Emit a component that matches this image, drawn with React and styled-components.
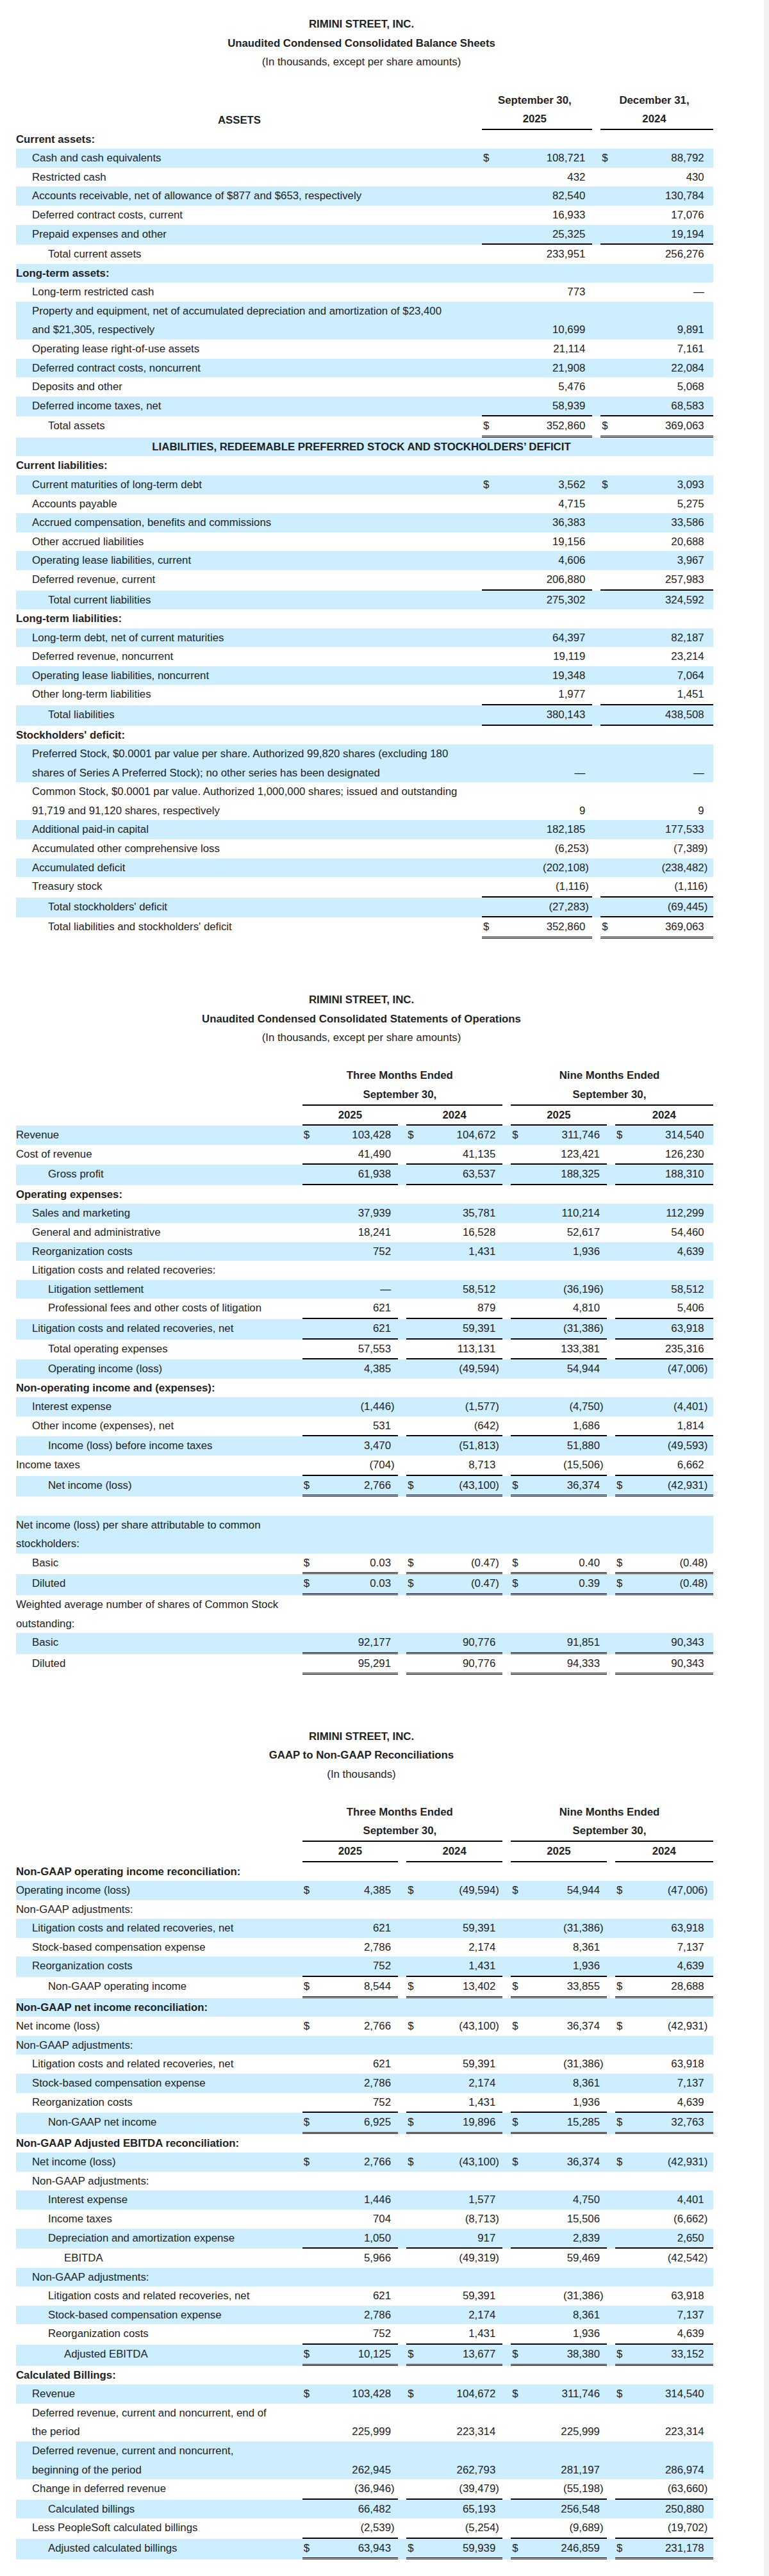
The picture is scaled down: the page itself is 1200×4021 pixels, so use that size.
import React from "react";
import styled, { createGlobalStyle } from "styled-components";

const H = 29.58;
const SHADE = "#cceeff";
const INK = "#222";

const GlobalStyle = createGlobalStyle`
  html, body { margin: 0; padding: 0; background: #fff; }
  body {
    font-family: "Liberation Sans", Arial, Helvetica, sans-serif;
    font-size: 16.8px;
    color: ${INK};
  }
`;

const Page = styled.div`
  box-sizing: border-box;
  width: 1200px;
  min-height: 4021px;
  padding: 23.2px 0 20px 25px;
  border-right: 8px solid #f1f1f1;
`;

const Section = styled.section`
  width: 1088px;
  margin-top: ${(p) => p.$top}px;
`;

const TitleBlock = styled.div`
  text-align: center;
  padding-right: 10px;
  margin-bottom: ${H}px;
`;

const TitleLine = styled.div`
  line-height: ${H}px;
  font-weight: ${(p) => (p.$bold ? 700 : 400)};
`;

const Table = styled.div`
  display: flex;
  flex-direction: column;
`;

const Row = styled.div`
  display: flex;
  align-items: stretch;
  background: ${(p) => (p.$shade ? SHADE : "transparent")};
`;

const Label = styled.div`
  flex: 0 0 ${(p) => p.$w}px;
  box-sizing: border-box;
  padding-left: ${(p) => p.$level * 25}px;
  line-height: ${H}px;
  font-weight: ${(p) => (p.$bold ? 700 : 400)};
  white-space: nowrap;
`;

const LabelLine = styled.span`
  display: block;
`;

const HeadLabel = styled.div`
  flex: 0 0 ${(p) => p.$w}px;
  box-sizing: border-box;
  display: flex;
  align-items: flex-end;
  justify-content: center;
  padding-right: 30px;
  line-height: ${H}px;
  font-weight: 700;
`;

const Heading = styled.div`
  flex: 1 1 auto;
  text-align: center;
  padding-right: 10px;
  line-height: ${H}px;
  font-weight: 700;
  white-space: nowrap;
`;

const HeadCell = styled.div`
  flex: 0 0 ${(p) => p.$w}px;
  box-sizing: border-box;
  margin-left: ${(p) => p.$gap}px;
  padding-right: ${(p) => p.$shift}px;
  text-align: center;
  line-height: ${H}px;
  font-weight: 700;
  white-space: nowrap;
  border-bottom: 2px solid #000;
`;

const ruleCss = {
  single: "2px solid #000",
  double: "3px double #000",
  none: "0",
};

const ValueCell = styled.div`
  flex: 0 0 ${(p) => p.$w}px;
  box-sizing: border-box;
  margin-left: ${(p) => p.$gap}px;
  padding-left: 2px;
  display: flex;
  align-items: flex-end;
  line-height: ${H}px;
  white-space: nowrap;
  border-bottom: ${(p) => ruleCss[p.$rule || "none"]};
`;

const Dollar = styled.span`
  flex: 0 0 auto;
`;

const Amount = styled.span`
  flex: 1 1 auto;
  text-align: right;
`;

const Paren = styled.span`
  flex: 0 0 ${(p) => p.$slot}px;
  text-align: left;
`;

const BALANCE = {
  label: 727,
  cols: [172, 175.4],
  slots: [10.7, 14],
  gap: 13.3,
};

const OPS = {
  label: 446.7,
  cols: [149.3, 149.7, 149.4, 152.7],
  slots: [11, 10.7, 10.7, 14],
  gap: 13.3,
};

function parseValue(s) {
  let rest = s.trim();
  let dollar = false;
  if (rest.startsWith("$")) {
    dollar = true;
    rest = rest.slice(1).trim();
  }
  const neg = rest.endsWith(")");
  if (neg) rest = rest.slice(0, -1);
  return { dollar, amount: rest, neg };
}

function Value({ text, w, slot, gap, rule }) {
  const { dollar, amount, neg } = parseValue(text);
  return (
    <ValueCell $w={w} $gap={gap} $rule={rule}>
      <Dollar>{dollar ? "$" : ""}</Dollar>
      <Amount>{amount}</Amount>
      <Paren $slot={slot}>{neg ? ")" : ""}</Paren>
    </ValueCell>
  );
}

function DataRow({ row, layout, shade }) {
  if (row.heading) {
    return (
      <Row $shade={shade}>
        <Heading>{row.heading}</Heading>
      </Row>
    );
  }
  const lines = Array.isArray(row.label) ? row.label : [row.label];
  return (
    <Row $shade={shade}>
      <Label $w={layout.label} $level={row.level || 0} $bold={row.bold}>
        {lines.map((l, i) => (
          <LabelLine key={i}>{l || "\u00a0"}</LabelLine>
        ))}
      </Label>
      {row.v &&
        row.v.map((t, i) => (
          <Value
            key={i}
            text={t}
            w={layout.cols[i]}
            slot={layout.slots[i]}
            gap={i === 0 ? 0 : layout.gap}
            rule={row.rule}
          />
        ))}
    </Row>
  );
}

function Titles({ lines }) {
  return (
    <TitleBlock>
      {lines.map((l, i) => (
        <TitleLine key={i} $bold={i < 2}>
          {l}
        </TitleLine>
      ))}
    </TitleBlock>
  );
}

function Body({ rows, layout, startShaded }) {
  return rows.map((row, i) => (
    <DataRow
      key={i}
      row={row}
      layout={layout}
      shade={(i % 2 === 0) === startShaded}
    />
  ));
}

function BalanceHeader() {
  const L = BALANCE;
  return (
    <Row>
      <HeadLabel $w={L.label}>ASSETS</HeadLabel>
      <HeadCell $w={L.cols[0]} $gap={0} $shift={7.4}>
        September 30,
        <br />
        2025
      </HeadCell>
      <HeadCell $w={L.cols[1]} $gap={L.gap} $shift={8}>
        December 31,
        <br />
        2024
      </HeadCell>
    </Row>
  );
}

function PeriodHeader() {
  const L = OPS;
  const g1 = L.cols[0] + L.gap + L.cols[1];
  const g2 = L.cols[2] + L.gap + L.cols[3];
  return (
    <>
      <Row>
        <Label $w={L.label} $level={0} />
        <HeadCell $w={g1} $gap={0} $shift={8}>
          Three Months Ended
          <br />
          September 30,
        </HeadCell>
        <HeadCell $w={g2} $gap={L.gap} $shift={8}>
          Nine Months Ended
          <br />
          September 30,
        </HeadCell>
      </Row>
      <Row>
        <Label $w={L.label} $level={0} />
        {["2025", "2024", "2025", "2024"].map((y, i) => (
          <HeadCell key={i} $w={L.cols[i]} $gap={i === 0 ? 0 : L.gap} $shift={0}>
            {y}
          </HeadCell>
        ))}
      </Row>
    </>
  );
}

const balanceRows = [
  { label: "Current assets:", bold: true },
  { label: "Cash and cash equivalents", level: 1, v: ["$ 108,721", "$ 88,792"] },
  { label: "Restricted cash", level: 1, v: ["432", "430"] },
  { label: "Accounts receivable, net of allowance of $877 and $653, respectively", level: 1, v: ["82,540", "130,784"] },
  { label: "Deferred contract costs, current", level: 1, v: ["16,933", "17,076"] },
  { label: "Prepaid expenses and other", level: 1, v: ["25,325", "19,194"], rule: "single" },
  { label: "Total current assets", level: 2, v: ["233,951", "256,276"] },
  { label: "Long-term assets:", bold: true },
  { label: "Long-term restricted cash", level: 1, v: ["773", "—"] },
  {
    label: [
      "Property and equipment, net of accumulated depreciation and amortization of $23,400",
      "and $21,305, respectively",
    ],
    level: 1,
    v: ["10,699", "9,891"],
  },
  { label: "Operating lease right-of-use assets", level: 1, v: ["21,114", "7,161"] },
  { label: "Deferred contract costs, noncurrent", level: 1, v: ["21,908", "22,084"] },
  { label: "Deposits and other", level: 1, v: ["5,476", "5,068"] },
  { label: "Deferred income taxes, net", level: 1, v: ["58,939", "68,583"], rule: "single" },
  { label: "Total assets", level: 2, v: ["$ 352,860", "$ 369,063"], rule: "double" },
  { heading: "LIABILITIES, REDEEMABLE PREFERRED STOCK AND STOCKHOLDERS\u2019 DEFICIT" },
  { label: "Current liabilities:", bold: true },
  { label: "Current maturities of long-term debt", level: 1, v: ["$ 3,562", "$ 3,093"] },
  { label: "Accounts payable", level: 1, v: ["4,715", "5,275"] },
  { label: "Accrued compensation, benefits and commissions", level: 1, v: ["36,383", "33,586"] },
  { label: "Other accrued liabilities", level: 1, v: ["19,156", "20,688"] },
  { label: "Operating lease liabilities, current", level: 1, v: ["4,606", "3,967"] },
  { label: "Deferred revenue, current", level: 1, v: ["206,880", "257,983"], rule: "single" },
  { label: "Total current liabilities", level: 2, v: ["275,302", "324,592"] },
  { label: "Long-term liabilities:", bold: true },
  { label: "Long-term debt, net of current maturities", level: 1, v: ["64,397", "82,187"] },
  { label: "Deferred revenue, noncurrent", level: 1, v: ["19,119", "23,214"] },
  { label: "Operating lease liabilities, noncurrent", level: 1, v: ["19,348", "7,064"] },
  { label: "Other long-term liabilities", level: 1, v: ["1,977", "1,451"], rule: "single" },
  { label: "Total liabilities", level: 2, v: ["380,143", "438,508"], rule: "single" },
  { label: "Stockholders' deficit:", bold: true },
  {
    label: [
      "Preferred Stock, $0.0001 par value per share. Authorized 99,820 shares (excluding 180",
      "shares of Series A Preferred Stock); no other series has been designated",
    ],
    level: 1,
    v: ["—", "—"],
  },
  {
    label: [
      "Common Stock, $0.0001 par value. Authorized 1,000,000 shares; issued and outstanding",
      "91,719 and 91,120 shares, respectively",
    ],
    level: 1,
    v: ["9", "9"],
  },
  { label: "Additional paid-in capital", level: 1, v: ["182,185", "177,533"] },
  { label: "Accumulated other comprehensive loss", level: 1, v: ["(6,253)", "(7,389)"] },
  { label: "Accumulated deficit", level: 1, v: ["(202,108)", "(238,482)"] },
  { label: "Treasury stock", level: 1, v: ["(1,116)", "(1,116)"], rule: "single" },
  { label: "Total stockholders' deficit", level: 2, v: ["(27,283)", "(69,445)"], rule: "single" },
  { label: "Total liabilities and stockholders' deficit", level: 2, v: ["$ 352,860", "$ 369,063"], rule: "double" },
];

const opsRows = [
  { label: "Revenue", level: 0, v: ["$ 103,428", "$ 104,672", "$ 311,746", "$ 314,540"] },
  { label: "Cost of revenue", level: 0, v: ["41,490", "41,135", "123,421", "126,230"], rule: "single" },
  { label: "Gross profit", level: 2, v: ["61,938", "63,537", "188,325", "188,310"], rule: "single" },
  { label: "Operating expenses:", bold: true },
  { label: "Sales and marketing", level: 1, v: ["37,939", "35,781", "110,214", "112,299"] },
  { label: "General and administrative", level: 1, v: ["18,241", "16,528", "52,617", "54,460"] },
  { label: "Reorganization costs", level: 1, v: ["752", "1,431", "1,936", "4,639"] },
  { label: "Litigation costs and related recoveries:", level: 1 },
  { label: "Litigation settlement", level: 2, v: ["—", "58,512", "(36,196)", "58,512"] },
  { label: "Professional fees and other costs of litigation", level: 2, v: ["621", "879", "4,810", "5,406"], rule: "single" },
  { label: "Litigation costs and related recoveries, net", level: 1, v: ["621", "59,391", "(31,386)", "63,918"], rule: "single" },
  { label: "Total operating expenses", level: 2, v: ["57,553", "113,131", "133,381", "235,316"], rule: "single" },
  { label: "Operating income (loss)", level: 2, v: ["4,385", "(49,594)", "54,944", "(47,006)"] },
  { label: "Non-operating income and (expenses):", bold: true },
  { label: "Interest expense", level: 1, v: ["(1,446)", "(1,577)", "(4,750)", "(4,401)"] },
  { label: "Other income (expenses), net", level: 1, v: ["531", "(642)", "1,686", "1,814"], rule: "single" },
  { label: "Income (loss) before income taxes", level: 2, v: ["3,470", "(51,813)", "51,880", "(49,593)"] },
  { label: "Income taxes", level: 0, v: ["(704)", "8,713", "(15,506)", "6,662"], rule: "single" },
  { label: "Net income (loss)", level: 2, v: ["$ 2,766", "$ (43,100)", "$ 36,374", "$ (42,931)"], rule: "double" },
  { label: "" },
  { label: ["Net income (loss) per share attributable to common", "stockholders:"], level: 0 },
  { label: "Basic", level: 1, v: ["$ 0.03", "$ (0.47)", "$ 0.40", "$ (0.48)"], rule: "double" },
  { label: "Diluted", level: 1, v: ["$ 0.03", "$ (0.47)", "$ 0.39", "$ (0.48)"], rule: "double" },
  { label: ["Weighted average number of shares of Common Stock", "outstanding:"], level: 0 },
  { label: "Basic", level: 1, v: ["92,177", "90,776", "91,851", "90,343"], rule: "double" },
  { label: "Diluted", level: 1, v: ["95,291", "90,776", "94,333", "90,343"], rule: "double" },
];

const litNet = ["621", "59,391", "(31,386)", "63,918"];
const sbc = ["2,786", "2,174", "8,361", "7,137"];
const reorg = ["752", "1,431", "1,936", "4,639"];
const netIncome = ["$ 2,766", "$ (43,100)", "$ 36,374", "$ (42,931)"];

const gaapRows = [
  { label: "Non-GAAP operating income reconciliation:", bold: true },
  { label: "Operating income (loss)", level: 0, v: ["$ 4,385", "$ (49,594)", "$ 54,944", "$ (47,006)"] },
  { label: "Non-GAAP adjustments:", level: 0 },
  { label: "Litigation costs and related recoveries, net", level: 1, v: litNet },
  { label: "Stock-based compensation expense", level: 1, v: sbc },
  { label: "Reorganization costs", level: 1, v: reorg, rule: "single" },
  { label: "Non-GAAP operating income", level: 2, v: ["$ 8,544", "$ 13,402", "$ 33,855", "$ 28,688"], rule: "double" },
  { label: "Non-GAAP net income reconciliation:", bold: true },
  { label: "Net income (loss)", level: 0, v: netIncome },
  { label: "Non-GAAP adjustments:", level: 0 },
  { label: "Litigation costs and related recoveries, net", level: 1, v: litNet },
  { label: "Stock-based compensation expense", level: 1, v: sbc },
  { label: "Reorganization costs", level: 1, v: reorg, rule: "single" },
  { label: "Non-GAAP net income", level: 2, v: ["$ 6,925", "$ 19,896", "$ 15,285", "$ 32,763"], rule: "double" },
  { label: "Non-GAAP Adjusted EBITDA reconciliation:", bold: true },
  { label: "Net income (loss)", level: 1, v: netIncome },
  { label: "Non-GAAP adjustments:", level: 1 },
  { label: "Interest expense", level: 2, v: ["1,446", "1,577", "4,750", "4,401"] },
  { label: "Income taxes", level: 2, v: ["704", "(8,713)", "15,506", "(6,662)"] },
  { label: "Depreciation and amortization expense", level: 2, v: ["1,050", "917", "2,839", "2,650"], rule: "single" },
  { label: "EBITDA", level: 3, v: ["5,966", "(49,319)", "59,469", "(42,542)"] },
  { label: "Non-GAAP adjustments:", level: 1 },
  { label: "Litigation costs and related recoveries, net", level: 2, v: litNet },
  { label: "Stock-based compensation expense", level: 2, v: sbc },
  { label: "Reorganization costs", level: 2, v: reorg, rule: "single" },
  { label: "Adjusted EBITDA", level: 3, v: ["$ 10,125", "$ 13,677", "$ 38,380", "$ 33,152"], rule: "double" },
  { label: "Calculated Billings:", bold: true },
  { label: "Revenue", level: 1, v: ["$ 103,428", "$ 104,672", "$ 311,746", "$ 314,540"] },
  {
    label: ["Deferred revenue, current and noncurrent, end of", "the period"],
    level: 1,
    v: ["225,999", "223,314", "225,999", "223,314"],
  },
  {
    label: ["Deferred revenue, current and noncurrent,", "beginning of the period"],
    level: 1,
    v: ["262,945", "262,793", "281,197", "286,974"],
  },
  { label: "Change in deferred revenue", level: 1, v: ["(36,946)", "(39,479)", "(55,198)", "(63,660)"], rule: "single" },
  { label: "Calculated billings", level: 2, v: ["66,482", "65,193", "256,548", "250,880"] },
  { label: "Less PeopleSoft calculated billings", level: 1, v: ["(2,539)", "(5,254)", "(9,689)", "(19,702)"], rule: "single" },
  { label: "Adjusted calculated billings", level: 2, v: ["$ 63,943", "$ 59,939", "$ 246,859", "$ 231,178"], rule: "double" },
];

export default function App() {
  return (
    <>
      <GlobalStyle />
      <Page>
        <Section $top={0}>
          <Titles
            lines={[
              "RIMINI STREET, INC.",
              "Unaudited Condensed Consolidated Balance Sheets",
              "(In thousands, except per share amounts)",
            ]}
          />
          <Table>
            <BalanceHeader />
            <Body rows={balanceRows} layout={BALANCE} startShaded={false} />
          </Table>
        </Section>

        <Section $top={81.2}>
          <Titles
            lines={[
              "RIMINI STREET, INC.",
              "Unaudited Condensed Consolidated Statements of Operations",
              "(In thousands, except per share amounts)",
            ]}
          />
          <Table>
            <PeriodHeader />
            <Body rows={opsRows} layout={OPS} startShaded={true} />
          </Table>
        </Section>

        <Section $top={81.2}>
          <Titles
            lines={[
              "RIMINI STREET, INC.",
              "GAAP to Non-GAAP Reconciliations",
              "(In thousands)",
            ]}
          />
          <Table>
            <PeriodHeader />
            <Body rows={gaapRows} layout={OPS} startShaded={false} />
          </Table>
        </Section>
      </Page>
    </>
  );
}
